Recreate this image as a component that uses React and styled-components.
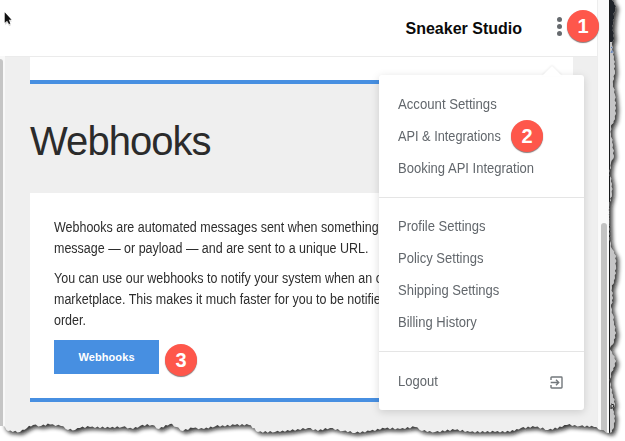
import React from "react";
import styled, { createGlobalStyle } from "styled-components";

const GlobalStyle = createGlobalStyle`
  * { box-sizing: border-box; }
  body { margin: 0; background: #fff; overflow: hidden; font-family: "Liberation Sans", Arial, sans-serif; }
  p, h1 { margin: 0; }
`;
const Screen = styled.div`
  position: relative; width: 625px; height: 441px; overflow: hidden;
  display: flex; background: #fff;
`;
const LeftGutter = styled.div`
  width: 5px; padding-top: 59px; background: linear-gradient(#fff 56px, #f8f8f8 56px);
`;
const LeftThumb = styled.div`
  width: 3px; height: 367px; background: #c5c5c5; border-radius: 0 3px 0 0;
`;
const Page = styled.div`
  width: 592px; height: 441px; background: #efefef; display: flex; flex-direction: column;
`;
const Header = styled.header`
  height: 57px; flex: none; background: #fff; border-bottom: 1px solid #ebebeb;
  display: flex; align-items: center; justify-content: flex-end; padding-right: 35px; gap: 35px;
`;
const Account = styled.strong`
  font-size: 16px; line-height: 20px; color: #0a0a0a; padding-top: 1px;
`;
const Dots = styled.div`
  display: flex; flex-direction: column; gap: 2px; padding-bottom: 3px;
`;
const Dot = styled.i`
  width: 5px; height: 5px; border-radius: 50%; background: #666a6e;
`;
const Main = styled.main`
  width: 543px; margin-left: 25px; display: flex; flex-direction: column;
`;
const Card = styled.section`
  height: ${(p) => p.$height}px; background: #fff; border-bottom: 4px solid #478fe1;
  padding: ${(p) => p.$pad || 0};
`;
const Title = styled.h1`
  height: 109px; padding-top: 34px; font-size: 40px; line-height: 46px;
  font-weight: 400; color: #2b2b2b; letter-spacing: -0.95px; white-space: nowrap;
`;
const Paragraph = styled.p`
  font-size: 14px; line-height: 21px; color: #2d2d2d; margin-bottom: 9px;
`;
const Line = styled.span`
  display: block; width: max-content; white-space: nowrap;
  transform: scaleX(${(p) => p.$fit || 0.892}); transform-origin: left;
`;
const Button = styled.button`
  display: block; width: 105px; height: 34px; padding: 0; border: 0; background: #478fe1;
  color: #fff; font: 700 11px/34px "Liberation Sans", Arial, sans-serif; letter-spacing: 0.1px;
`;
const Track = styled.div`
  width: 12px; height: 441px; padding: 223px 0 0 3px; background: #fafafa; border-left: 1px solid #ededed;
`;
const Thumb = styled.div`
  width: 6px; height: 240px; border-radius: 3px; background: #c3c3c3;
`;
const Menu = styled.nav`
  position: absolute; left: 379px; top: 75px; width: 205px; height: 335px;
  background: #fff; border-radius: 3px; box-shadow: 0 2px 9px rgba(0,0,0,.15);
  color: #62676c; font-size: 14px;
`;
const Notch = styled.svg`
  position: absolute; left: 163px; top: -10px; filter: drop-shadow(0 -1px 1px rgba(0,0,0,.07));
`;
const Group = styled.div`
  padding: ${(p) => p.$top || 13}px 20px 13px 19px;
  & + & { border-top: 1px solid #e5e5e5; }
`;
const Item = styled.div`
  height: 32px; display: flex; align-items: center; justify-content: space-between;
`;
const Label = styled.span`
  white-space: nowrap; transform: scaleX(${(p) => p.$fit || 0.93}); transform-origin: left;
`;
const ExitIcon = styled.svg`
  margin: 2px 1px 0 0;
`;
const Badge = styled.div`
  position: absolute; left: ${(p) => p.$x}px; top: ${(p) => p.$y}px;
  width: 32px; height: 32px; border-radius: 50%; background: #fe574b;
  box-shadow: 0 1px 1px rgba(70,50,50,.65); color: #fff; text-align: center;
  font: 700 20px/32px "Liberation Sans", Arial, sans-serif;
`;
const Overlay = styled.svg`
  position: absolute; left: 0; top: 0; pointer-events: none;
`;

const bottom = [
  [3,426],[8,431],[20,432],[27,428],[33,425],[41,426],[50,424.5],[61,426],[68,430],[75,430],[80,428],
  [90,427],[110,428],[122,427],[133,429],[140,426],[152,425],[159,429],[170,424],[176,427],[183,431],
  [193,428],[204,429],[215,426.5],[235,425],[249,425],[258,432],[275,432],[290,431],[308,428],[318,431],
  [330,428],[343,431],[355,433],[370,431],[385,428.5],[400,429],[415,427],[422,431],[435,432],[455,430],
  [470,432],[495,432],[510,432],[521,428],[535,427],[548,430],[562,427],[567,425],[580,426],[594,427],
  [601,430],[609,433],
];
const right = [
  [612,432],[614,426],[615,416],[613,410],[615,404],[613,395],[610,382],[611,374],[615,366],[616,361],
  [612,352],[610,348],[614,342],[616,333],[614,322],[613,315],[611,307],[613,298],[612,288],[615,278],
  [616,266],[616,256],[612,249],[610,241],[609.5,222],[609.5,205],[612,194],[612,184],[610,173],
  [611,163],[614,156],[613,145],[611,134],[611,127],[615,119],[616,108],[615,95],[613,84],[615,71],
  [614,57],[612,45],[614,38],[613,28],[614,16],[616,6],[612,0],
];
const fray = (points, dx, dy) => {
  const out = [];
  points.forEach(([x, y], i) => {
    out.push([x, y]);
    const next = points[i + 1];
    if (!next) return;
    const n = Math.max(2, Math.round(Math.hypot(next[0] - x, next[1] - y) / 2.5));
    for (let k = 1; k < n; k += 1) {
      const t = k / n;
      const bump = (k % 2 ? -1 : 0.6) * (0.7 + ((i * 7 + k * 3) % 5) * 0.15);
      out.push([x + (next[0] - x) * t + bump * dx, y + (next[1] - y) * t + bump * dy]);
    }
  });
  return out;
};
const toPath = (pts) => pts.map(([x, y]) => `${x.toFixed(1)},${y.toFixed(1)}`).join("L");
const frayedRight = fray(right, 0.7, 0);
const paper = `M-20,-20L-20,426L${toPath(fray(bottom, 0, 1))}L${toPath(frayedRight)}L612,-20Z`;
const outside = `M-20,-20H660V480H-20Z${paper}`;
const shadowPaper = `M3,-20L${toPath(bottom)}L${toPath(right)}L612,-20Z`;

const TornEdge = () => (
  <Overlay width="625" height="441" viewBox="0 0 625 441">
    <defs>
      <clipPath id="outside"><path d={outside} clipRule="evenodd" /></clipPath>
      <filter id="soft" x="-5%" y="-5%" width="110%" height="110%"><feGaussianBlur stdDeviation="2" /></filter>
    </defs>
    <path d={`M609,433L${toPath(frayedRight)}H609Z`} fill="#c5c5c6" />
    <path d="M609,0h9v38l-3,4h-6z" fill="#20242a" />
    <path d="M611 47l2 2-2 4m2-5v5" stroke="#547abc" fill="none" />
    <path d="M609.5 0V433" stroke="#17191b" strokeWidth="1" />
    <path d="M611 404l3 1-1 3h-2m0-3v4" stroke="#222" fill="none" />
    <g clipPath="url(#outside)">
      <path d="M-2-2H630V445H-2z" fill="#fff" />
      <path d={shadowPaper} fill="#111" opacity=".85" filter="url(#soft)" transform="translate(2.5 2.5)" />
    </g>
  </Overlay>
);

const Pointer = () => (
  <Overlay width="20" height="32" viewBox="0 0 20 32">
    <path d="M5 12V24L7.4 21.7L9.1 25L11 24.2L9.5 20.5H12Z" fill="#999" opacity=".4" transform="translate(0 1)" />
    <path d="M4.7 12.3V22.8L7.1 20.7L9 24.1L10.3 23.5L8.7 19.8H11.6Z" fill="#111" />
  </Overlay>
);

const LogoutIcon = () => (
  <ExitIcon width="13" height="13" viewBox="0 0 13 13" fill="none" stroke="#73787c" strokeWidth="1.4">
    <path d="M1 4V1.7Q1 1 1.7 1H11.3Q12 1 12 1.7V11.3Q12 12 11.3 12H1.7Q1 12 1 11.3V9" />
    <path d="M0.7 6.5H8.5M6 3.8L8.7 6.5L6 9.2" />
  </ExitIcon>
);

export default function App() {
  return (
    <>
      <GlobalStyle />
      <Screen>
        <LeftGutter><LeftThumb /></LeftGutter>
        <Page>
          <Header>
            <Account>Sneaker Studio</Account>
            <Dots><Dot /><Dot /><Dot /></Dots>
          </Header>
          <Main>
            <Card $height={27} />
            <Title>Webhooks</Title>
            <Card $height={209} $pad="24px">
              <Paragraph>
                <Line>Webhooks are automated messages sent when something</Line>
                <Line>message — or payload — and are sent to a unique URL.</Line>
              </Paragraph>
              <Paragraph>
                <Line>You can use our webhooks to notify your system when an o</Line>
                <Line>marketplace. This makes it much faster for you to be notifie</Line>
                <Line>order.</Line>
              </Paragraph>
              <Button>Webhooks</Button>
            </Card>
          </Main>
        </Page>
        <Track><Thumb /></Track>
        <Menu>
          <Notch width="20" height="11" viewBox="0 0 20 11"><path d="M0 11L10 1L20 11Z" fill="#fff" /></Notch>
          <Group>
            <Item><Label $fit={0.94}>Account Settings</Label></Item>
            <Item><Label $fit={0.911}>API &amp; Integrations</Label></Item>
            <Item><Label>Booking API Integration</Label></Item>
          </Group>
          <Group $top={12}>
            <Item><Label>Profile Settings</Label></Item>
            <Item><Label>Policy Settings</Label></Item>
            <Item><Label>Shipping Settings</Label></Item>
            <Item><Label>Billing History</Label></Item>
          </Group>
          <Group>
            <Item><Label>Logout</Label><LogoutIcon /></Item>
          </Group>
        </Menu>
        <TornEdge />
        <Badge $x={567} $y={10}>1</Badge>
        <Badge $x={511} $y={120}>2</Badge>
        <Badge $x={165} $y={344}>3</Badge>
        <Pointer />
      </Screen>
    </>
  );
}
